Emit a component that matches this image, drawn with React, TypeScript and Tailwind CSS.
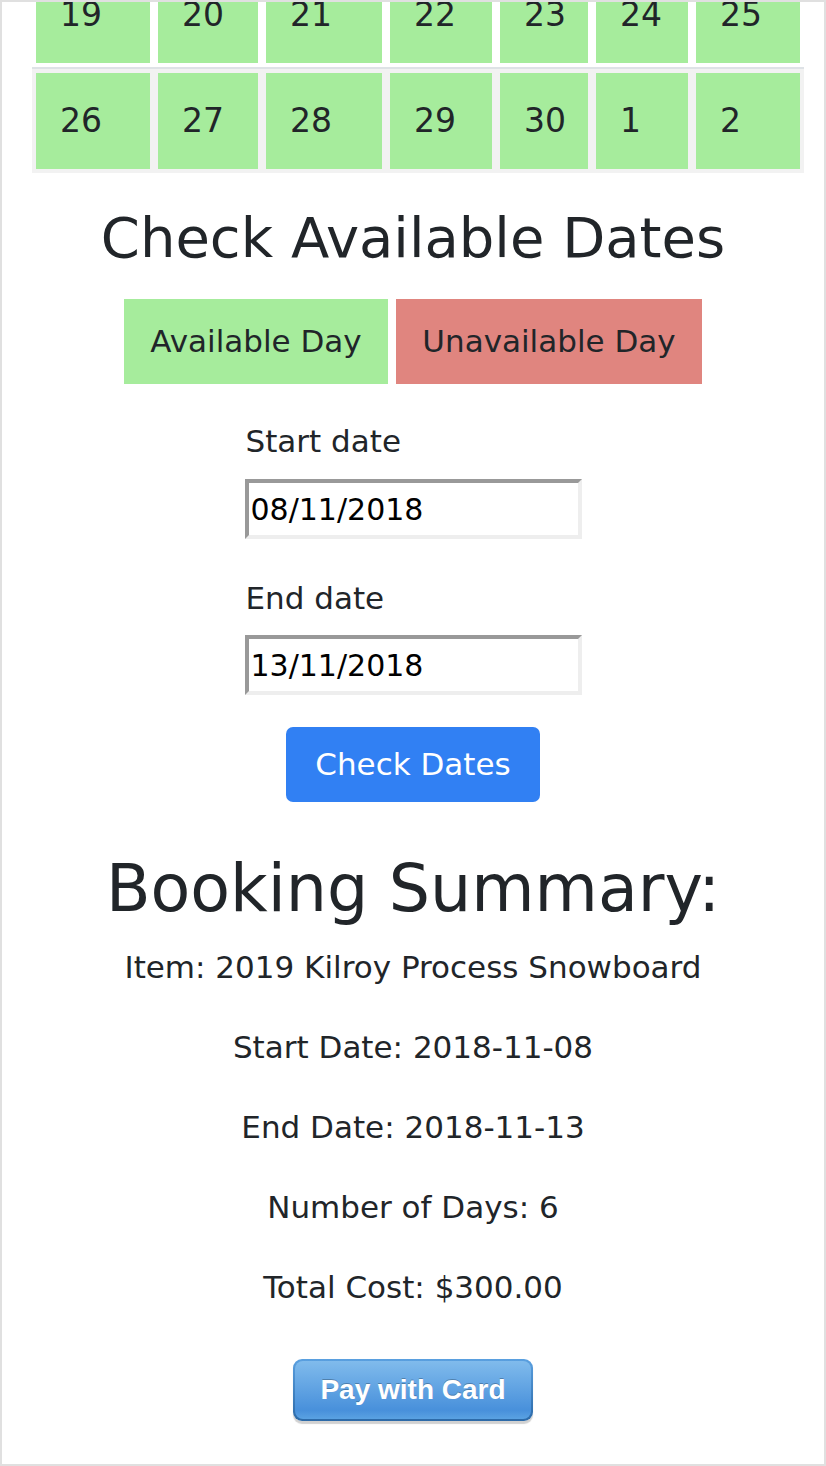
const row1 = ["19", "20", "21", "22", "23", "24", "25"];
const row2 = ["26", "27", "28", "29", "30", "1", "2"];
const widths = ["w-[114px]", "w-[100px]", "w-[116px]", "w-[102px]", "w-[88px]", "w-[92px]", "w-[104px]"];

const DayCell = ({ day, w }: { day: string; w: string }) => (
  <div className={`${w} h-[96px] bg-[#a6ec9c] flex items-center pl-6 text-[33px]`}>{day}</div>
);

const summary = [
  "Item: 2019 Kilroy Process Snowboard",
  "Start Date: 2018-11-08",
  "End Date: 2018-11-13",
  "Number of Days: 6",
  "Total Cost: $300.00",
];

export default function App() {
  return (
    <div className="h-[1466px] w-full overflow-hidden border-2 border-[#e0e0e0] bg-white font-['DejaVu_Sans',sans-serif] text-[#212529]">
      {/* calendar, scrolled so the first row is cut off */}
      <div className="ml-[30px] -mt-[39px] w-[772px]">
        <div className="flex gap-2 p-1">
          {row1.map((d, i) => (
            <DayCell key={d} day={d} w={widths[i]} />
          ))}
        </div>
        <div className="flex gap-2 border-t-2 border-[#dee2e6] bg-[#f2f2f2] p-1">
          {row2.map((d, i) => (
            <DayCell key={d} day={d} w={widths[i]} />
          ))}
        </div>
      </div>

      <h2 className="mt-8 text-center text-[56px] leading-[66px]">Check Available Dates</h2>

      <div className="mt-[28px] flex justify-center gap-2 text-[31px]">
        <div className="flex h-[85px] w-[264px] items-center justify-center bg-[#a6ec9c]">Available Day</div>
        <div className="flex h-[85px] w-[306px] items-center justify-center bg-[#e0857f]">Unavailable Day</div>
      </div>

      <div className="mx-auto mt-[37px] w-[337px] text-[31px] leading-[40px]">
        <label className="block pl-px">Start date</label>
        <input
          readOnly
          defaultValue="08/11/2018"
          className="mt-[18px] block h-[60px] w-[337px] border-4 border-t-[#999] border-l-[#999] border-r-[#eee] border-b-[#eee] px-[2px] text-[30px] text-black outline-none"
        />
        <label className="mt-[39px] block pl-px">End date</label>
        <input
          readOnly
          defaultValue="13/11/2018"
          className="mt-[17px] block h-[60px] w-[337px] border-4 border-t-[#999] border-l-[#999] border-r-[#eee] border-b-[#eee] px-[2px] text-[30px] text-black outline-none"
        />
      </div>

      <div className="mt-8 flex justify-center">
        <button className="h-[75px] w-[254px] rounded-[7px] bg-[#3180f3] text-[31px] text-white">Check Dates</button>
      </div>

      <h1 className="mt-[49px] text-center text-[65px] leading-[76px]">Booking Summary:</h1>

      <div className="mt-5 flex flex-col items-center gap-10 text-[31px] leading-[40px]">
        {summary.map((s) => (
          <p key={s}>{s}</p>
        ))}
      </div>

      <div className="mt-[52px] flex justify-center">
        <button className="rounded-[9px] bg-gradient-to-b from-[#5aa0e0] to-[#2c6aa8] p-[2px] shadow-[0_3px_1px_rgba(0,0,0,0.18)]">
          <span className="block h-[58px] rounded-[8px] bg-[linear-gradient(#80bbec,#4890db_85%,#5aa2e2)] px-[25px] font-['Liberation_Sans',Arial,sans-serif] text-[28px] font-bold leading-[58px] text-white [text-shadow:0_-1px_0_rgba(0,0,0,0.25)]">
            Pay with Card
          </span>
        </button>
      </div>
    </div>
  );
}
